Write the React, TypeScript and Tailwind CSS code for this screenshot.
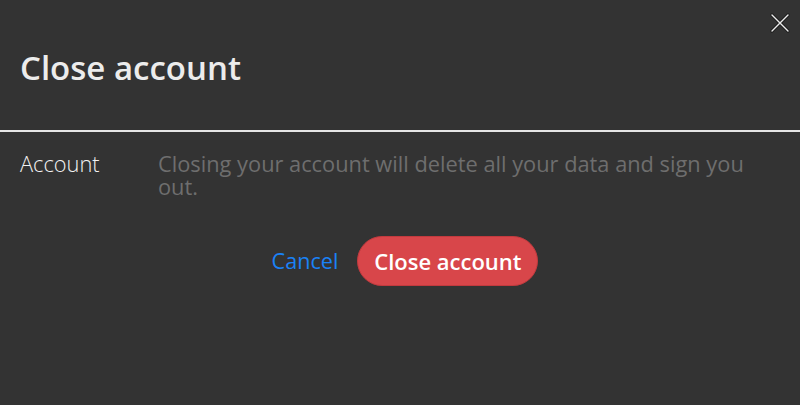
import React from "react";

export default function App() {
  return (
    <div
      className="relative w-[800px] h-[405px] bg-[#333333] overflow-hidden"
      style={{ fontFamily: '"Open Sans", sans-serif' }}
    >
      <button className="absolute right-[9px] top-[12px] w-[22px] h-[22px] flex items-center justify-center">
        <svg width="22" height="22" viewBox="0 0 22 22">
          <path d="M3 3 L19 19 M19 3 L3 19" stroke="#1e1e1e" strokeWidth="3.2" strokeLinecap="round" />
          <path d="M3 3 L19 19 M19 3 L3 19" stroke="#ececec" strokeWidth="1.4" strokeLinecap="round" />
        </svg>
      </button>
      <div className="px-5 pt-[44px] pb-[38px]">
        <h1 className="text-[33px] leading-[48px] font-semibold text-[#ececec]">Close account</h1>
      </div>
      <div className="h-[2px] bg-[#e6e6e6]" />
      <div className="flex px-5 pt-[20px]">
        <div className="w-[138px] shrink-0 text-[21.8px] leading-[23px] font-light text-[#f2f2f2]">Account</div>
        <div className="w-[600px] text-[21.8px] leading-[23px] text-[#6e6e6e]">
          Closing your account will delete all your data and sign you out.
        </div>
      </div>
      <div className="flex justify-center items-center gap-[19px] mt-[38px] pl-[10px]">
        <button className="text-[21.6px] text-[#1a82f7] px-0">Cancel</button>
        <button className="h-[50px] w-[181px] rounded-full bg-[#d8464a] border border-[#c23a3e] text-white text-[22px] font-semibold">
          Close account
        </button>
      </div>
    </div>
  );
}
